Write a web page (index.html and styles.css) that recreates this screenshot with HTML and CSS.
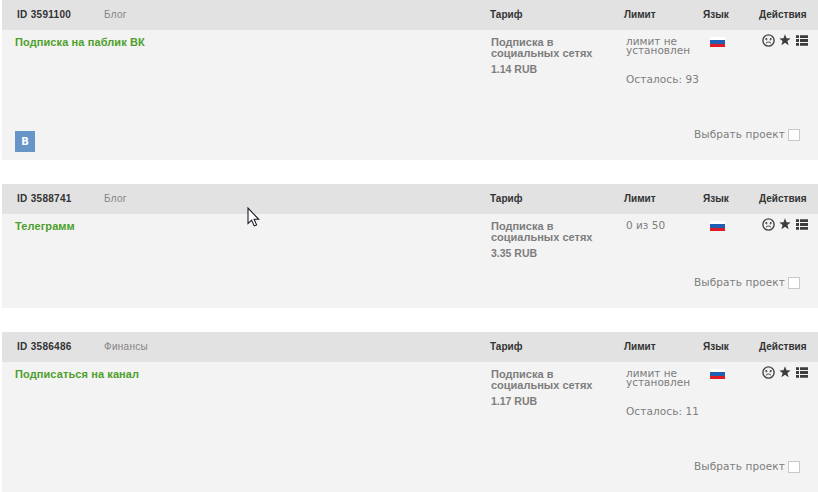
FILE: index.html
```html
<!DOCTYPE html>
<html lang="ru">
<head>
  <meta charset="UTF-8">
  <title>Проекты</title>
  <link rel="stylesheet" href="styles.css">
</head>
<body>

  <!-- Общие иконки -->
  <svg class="sprite" width="0" height="0">
    <symbol id="sad" viewBox="0 0 13 13">
      <circle cx="6.5" cy="6.5" r="5.6" fill="none" stroke="#444" stroke-width="1.4"/>
      <path d="M3 5.3l2.2-1.2M10 5.3l-2.2-1.2M4 9.3c1.2-1.7 3.8-1.7 5 0" fill="none" stroke="#444" stroke-width="1"/>
      <circle cx="4.7" cy="5.8" r=".7" fill="#444"/>
      <circle cx="8.3" cy="5.8" r=".7" fill="#444"/>
    </symbol>
    <symbol id="star" viewBox="0 0 12 12">
      <path d="M6 .3l1.5 3.9 4.2.2-3.3 2.6 1.2 4.2L6 8.8l-3.6 2.4L3.6 7 .3 4.4l4.2-.2z" fill="#3c3c3c"/>
    </symbol>
    <symbol id="list" viewBox="0 0 12 11">
      <path d="M0 .2h3v2.8H0zM4 .2h8v2.8H4zM0 4.1h3v2.8H0zM4 4.1h8v2.8H4zM0 8h3v2.8H0zM4 8h8v2.8H4z" fill="#3c3c3c"/>
    </symbol>
  </svg>

  <div class="project">
    <div class="head">
      <div class="id">ID 3591100</div>
      <div class="category">Блог</div>
      <div>Тариф</div>
      <div>Лимит</div>
      <div>Язык</div>
      <div>Действия</div>
    </div>
    <div class="content">
      <div class="info">
        <a class="title">Подписка на паблик ВК</a>
        <div class="tariff">Подписка в социальных сетях<span class="price">1.14 RUB</span></div>
        <div class="limit">лимит не установлен<span class="left">Осталось: 93</span></div>
        <div class="flag"></div>
        <div class="actions">
          <svg class="sad"><use href="#sad"/></svg>
          <svg class="star"><use href="#star"/></svg>
          <svg class="list"><use href="#list"/></svg>
        </div>
      </div>
      <div class="foot">
        <span class="vk">B</span>
        <label class="choose">Выбрать проект<input type="checkbox"></label>
      </div>
    </div>
  </div>

  <div class="project short">
    <div class="head">
      <div class="id">ID 3588741</div>
      <div class="category">Блог</div>
      <div>Тариф</div>
      <div>Лимит</div>
      <div>Язык</div>
      <div>Действия</div>
    </div>
    <div class="content">
      <div class="info">
        <a class="title">Телеграмм</a>
        <div class="tariff">Подписка в социальных сетях<span class="price">3.35 RUB</span></div>
        <div class="limit">0 из 50</div>
        <div class="flag"></div>
        <div class="actions">
          <svg class="sad"><use href="#sad"/></svg>
          <svg class="star"><use href="#star"/></svg>
          <svg class="list"><use href="#list"/></svg>
        </div>
      </div>
      <div class="foot">
        <label class="choose">Выбрать проект<input type="checkbox"></label>
      </div>
    </div>
  </div>

  <div class="project">
    <div class="head">
      <div class="id">ID 3586486</div>
      <div class="category">Финансы</div>
      <div>Тариф</div>
      <div>Лимит</div>
      <div>Язык</div>
      <div>Действия</div>
    </div>
    <div class="content">
      <div class="info">
        <a class="title">Подписаться на канал</a>
        <div class="tariff">Подписка в социальных сетях<span class="price">1.17 RUB</span></div>
        <div class="limit">лимит не установлен<span class="left">Осталось: 11</span></div>
        <div class="flag"></div>
        <div class="actions">
          <svg class="sad"><use href="#sad"/></svg>
          <svg class="star"><use href="#star"/></svg>
          <svg class="list"><use href="#list"/></svg>
        </div>
      </div>
      <div class="foot">
        <label class="choose">Выбрать проект<input type="checkbox"></label>
      </div>
    </div>
  </div>

  <!-- Курсор -->
  <svg class="cursor" viewBox="0 0 13 21">
    <path d="M1 1v15.5l3.6-3.4 2.6 5.8 2.4-1-2.5-5.6h4.6z" fill="#fff" stroke="#1c1c2c" stroke-width="1.1"/>
  </svg>

</body>
</html>
```

FILE: styles.css
```css
body {
  margin: 0;
  background: #fff;
  font-family: "Liberation Sans", Arial, sans-serif;
  font-size: 11px;
  color: #7d7d7d;
  overflow: hidden;
}

.sprite {
  display: block;
}

.project {
  margin: 0 0 24px 2px;
}

.head {
  display: grid;
  grid-template-columns: 87px 386px 134px 79px 56px 1fr;
  height: 30px;
  padding-left: 15px;
  box-sizing: border-box;
  line-height: 30px;
  background: #e2e2e2;
  color: #333;
  font-size: 10px;
  font-weight: bold;
}

.head .id {
  letter-spacing: 0.3px;
}

.head .category {
  color: #858585;
  font-weight: normal;
  letter-spacing: 0.3px;
}

.content {
  display: flex;
  flex-direction: column;
  justify-content: space-between;
  height: 130px;
  padding: 4px 18px 8px 13px;
  box-sizing: border-box;
  background: #f3f3f3;
}

.short .content {
  height: 94px;
}

.info {
  display: grid;
  grid-template-columns: 476px 135px 84px 52px 1fr;
  align-items: start;
}

.title {
  margin-top: 2px;
  line-height: 13px;
  font-weight: bold;
  letter-spacing: 0.1px;
  color: #4d9f2b;
}

.tariff {
  width: 120px;
  margin-top: 3px;
  line-height: 11px;
  font-weight: bold;
}

.price {
  display: block;
  margin-top: 5px;
  font-size: 10.5px;
}

.limit {
  width: 76px;
  margin-top: 3px;
  font-family: "DejaVu Sans", Verdana, sans-serif;
  font-size: 10.5px;
  line-height: 9px;
}

.left {
  display: block;
  margin-top: 20px;
  white-space: nowrap;
  letter-spacing: 0.1px;
}

.flag {
  width: 15px;
  height: 10px;
  margin-top: 3px;
  background: linear-gradient(#fff 3px, #1f5fb4 3px, #1f5fb4 7px, #e01b22 7px);
}

.actions {
  display: flex;
}

.sad {
  width: 13px;
  height: 13px;
  margin-right: 4px;
}

.star {
  width: 12px;
  height: 12px;
  margin-right: 5px;
}

.list {
  width: 12px;
  height: 11px;
  margin-top: 1px;
}

.foot {
  display: flex;
  align-items: flex-end;
}

.vk {
  width: 20px;
  height: 21px;
  line-height: 21px;
  text-align: center;
  background: #6795c8;
  color: #fff;
  font-family: "DejaVu Sans", Verdana, sans-serif;
  font-size: 10px;
  font-weight: bold;
}

.choose {
  display: flex;
  align-items: center;
  margin: 0 0 11px auto;
  font-family: "DejaVu Sans", Verdana, sans-serif;
  font-size: 10.5px;
  line-height: 14px;
  letter-spacing: 0.1px;
}

.choose input {
  appearance: none;
  width: 12px;
  height: 12px;
  margin: 2px 0 0 3px;
  border: 1px solid #c8c8c8;
  background: #fff;
}

.cursor {
  position: absolute;
  left: 247px;
  top: 207px;
  width: 13px;
  height: 21px;
}
```
